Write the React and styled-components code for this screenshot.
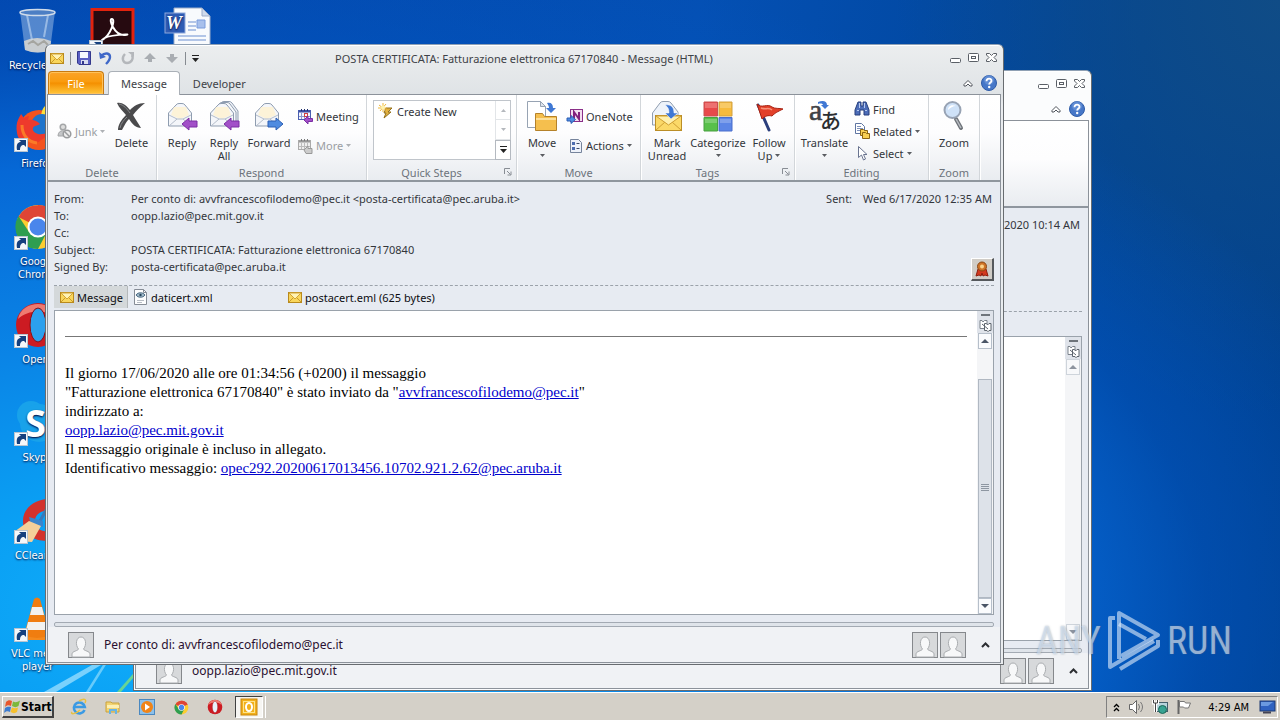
import React from 'react';
import styled, { createGlobalStyle, css } from 'styled-components';

const uiFont = "'Noto Sans', 'Open Sans', sans-serif";
const shellFont = "'DejaVu Sans Condensed', 'DejaVu Sans', sans-serif";

const GlobalStyle = createGlobalStyle`
  * {
    box-sizing: border-box;
  }

  body {
    margin: 0;
    overflow: hidden;
    font-family: ${uiFont};
    font-size: 11px;
    color: #33363b;
  }

  button {
    font: inherit;
    color: inherit;
    border: 0;
    padding: 0;
    background: none;
  }
`;

/* desktop */

const Screen = styled.div`
  display: flex;
  flex-direction: column;
  height: 100vh;
`;

const Desktop = styled.main`
  position: relative;
  flex: 1;
  min-height: 0;
  overflow: hidden;
  background: radial-gradient(ellipse 98% 98% at 14% 88%, #12b0fb 0%, #0aa0f4 18%, #0a84e6 40%, #0668d6 66%, rgba(2, 84, 190, 0.6) 82%, rgba(0, 70, 150, 0) 100%),
    radial-gradient(ellipse 30% 60% at 100% 0%, #104c86 0%, rgba(8, 68, 140, 0) 100%),
    linear-gradient(100deg, #0345ac 0%, #0450b4 50%, #004496 82%, #003f8c 100%);
`;

const LightRays = styled.svg`
  position: absolute;
  left: 0;
  bottom: 0;
`;

const ShortcutGrid = styled.nav`
  position: relative;
  display: grid;
  grid-template-columns: repeat(3, 75px);
  grid-auto-rows: 98px;
  width: max-content;
  padding-top: 7px;
`;

const Shortcut = styled.a`
  grid-column: ${({ $column }) => $column};
  display: flex;
  flex-direction: column;
  align-items: center;
  color: #fff;
  font-family: ${shellFont};
  font-size: 11px;
  line-height: 13px;
  text-align: center;
  text-decoration: none;
  text-shadow: 0 1px 2px #003;

  span {
    width: 62px;
    margin-top: 4px;
  }
`;

const Watermark = styled.div`
  position: absolute;
  right: 48px;
  bottom: 18px;
  display: flex;
  align-items: center;
  gap: 6px;
  color: rgba(225, 236, 250, 0.6);
  font-family: 'Roboto Condensed', 'Liberation Sans Narrow', 'Open Sans', sans-serif;
  font-size: 38px;
  font-weight: 400;
  line-height: 66px;
  text-shadow: 0 0 2px rgba(90, 110, 130, 0.5);
  pointer-events: none;
`;

/* message window */

const Frame = styled.section`
  position: absolute;
  top: ${({ $inset }) => $inset[0]}px;
  right: ${({ $inset }) => $inset[1]}px;
  bottom: ${({ $inset }) => $inset[2]}px;
  left: ${({ $inset }) => $inset[3]}px;
  display: flex;
  flex-direction: column;
  padding: 0 2px 1px 1px;
  border: 1px solid #686c70;
  border-top-color: #8fa0b4;
  border-radius: 6px 6px 0 0;
  box-shadow: inset 0 1px #fff;
  background: ${({ $inactive }) =>
    $inactive ? '#fbfcfd' : 'linear-gradient(#eceeef, #dfe3e6 50px, #e9ecef 60px)'};
`;

const TitleBar = styled.header`
  display: grid;
  grid-template-columns: 1fr auto 1fr;
  align-items: center;
  height: 26px;
  padding: 0 2px;
`;

const QuickAccess = styled.div`
  display: flex;
  align-items: center;
  gap: 6px;
`;

const Divider = styled.i`
  width: 1px;
  height: 13px;
  margin: 0 -1px;
  background: #868b91;
`;

const IconButton = styled.button`
  display: flex;
`;

const Title = styled.h1`
  margin: 0;
  font-size: 11px;
  font-weight: 400;
  color: #3e4247;
`;

const WindowButtons = styled.div`
  display: flex;
  justify-content: flex-end;
  gap: 5px;
  padding-right: 1px;
`;

const TabRow = styled.div`
  display: flex;
  align-items: flex-end;
  height: 23px;
  padding: 0 4px 0 1px;
`;

const Tab = styled.button`
  height: 23px;
  padding: 0 12px;
  border: 1px solid transparent;
  border-bottom: 0;
  border-radius: 4px 4px 0 0;
  color: #3e4247;

  ${({ $kind }) =>
    $kind === 'file' &&
    css`
      width: 56px;
      margin-right: 4px;
      color: #fff;
      border-color: #c87a10;
      background: linear-gradient(#fba32a, #f99b0d 45%, #f48f00 50%, #ffc63a);
      box-shadow: inset 0 0 0 1px #ffc25a;
    `}

  ${({ $kind }) =>
    $kind === 'active' &&
    css`
      position: relative;
      height: 24px;
      margin-bottom: -1px;
      border-color: #aab0b7;
      background: #fff;
    `}
`;

const TabTools = styled.div`
  display: flex;
  align-items: center;
  gap: 8px;
  height: 23px;
  margin-left: auto;
`;

const Panel = styled.div`
  display: flex;
  flex-direction: column;
  flex: 1;
  min-height: 0;
  border: 1px solid #8c929a;
  background: #e7ebf2;
`;

const Ribbon = styled.div`
  display: flex;
  height: 87px;
  flex: none;
  border-bottom: 2px solid #8f969e;
  background: linear-gradient(#fff 0%, #fdfdfe 45%, #e9ecf0 100%);
`;

const Group = styled.div`
  display: flex;
  flex-direction: column;
  width: ${({ $width }) => $width}px;
  border-right: 1px solid #d2d6da;
  box-shadow: 1px 0 #fff;
`;

const GroupBody = styled.div`
  display: flex;
  height: 69px;
  padding: 3px 4px 0;
`;

const GroupLabel = styled.div`
  display: flex;
  align-items: center;
  height: 16px;
  color: #6c737b;

  span {
    flex: 1;
    text-align: center;
  }

  button {
    margin: 0 4px 0 8px;
  }
`;

const BigButton = styled.button`
  display: flex;
  flex-direction: column;
  align-items: center;
  flex: none;
  width: ${({ $width }) => $width}px;
  padding-top: 3px;
  line-height: 13px;
  white-space: nowrap;

  > svg:first-child {
    margin-bottom: 3px;
  }
`;

const ArrowLine = styled.span`
  display: flex;
  align-items: center;
  justify-content: center;
  gap: 3px;
  height: 13px;
`;

const SmallStack = styled.div`
  display: flex;
  flex-direction: column;
  justify-content: space-evenly;
  height: 66px;
  padding: 0 4px;
`;

const SmallButton = styled.button`
  display: flex;
  align-items: center;
  gap: 3px;
  height: 22px;
  white-space: nowrap;
  color: ${({ disabled }) => (disabled ? '#9a9ea3' : 'inherit')};
`;

const Gallery = styled.div`
  display: flex;
  width: 138px;
  height: 60px;
  margin: 2px 0 0 2px;
  border: 1px solid #c0c5cb;
  background: #fff;
`;

const GallerySteps = styled.div`
  flex: 1;
  padding: 0 4px;

  button {
    height: 20px;
  }
`;

const GalleryScroll = styled.div`
  display: grid;
  grid-template-rows: 1fr 1fr 1fr;
  width: 15px;
  border-left: 1px solid #e2e5e8;

  button {
    display: flex;
    align-items: center;
    justify-content: center;
    border-bottom: 1px solid #e2e5e8;
  }

  button:last-child {
    border: 1px solid #b4b9c0;
    margin: 0 -1px -1px;
  }
`;

const MessageHeader = styled.div`
  display: flex;
  justify-content: space-between;
  flex: none;
  height: 104px;
  margin: 0 6px;
  padding: 8px 2px 0 0;
  border-bottom: 1px dashed #9ba2aa;
`;

const Fields = styled.dl`
  display: grid;
  grid-template-columns: 77px auto;
  grid-auto-rows: 17px;
  align-content: start;
  margin: 0;
  line-height: 17px;

  dd {
    margin: 0;
  }
`;

const SentColumn = styled.div`
  display: flex;
  flex-direction: column;
  justify-content: space-between;
  align-items: flex-end;
  line-height: 17px;

  p {
    display: flex;
    gap: 11px;
    margin: 0;
  }
`;

const SealButton = styled.button`
  display: flex;
  align-items: center;
  justify-content: center;
  width: 23px;
  height: 23px;
  margin: 0 -2px 4px 0;
  border: 1px solid #fff;
  border-right: 2px solid #55585c;
  border-bottom: 2px solid #55585c;
  background: #d0ccc6;
`;

const Attachments = styled.div`
  display: flex;
  flex: none;
  height: 24px;
  padding: 0 0 2px 6px;
  color: #0c0c10;
`;

const Attachment = styled.button`
  display: flex;
  align-items: center;
  gap: 2px;
  width: ${({ $width }) => $width}px;
  padding-left: 5px;
  white-space: nowrap;
  border-right: 1px solid ${({ $active }) => ($active ? '#b4b8ba' : 'transparent')};
  background: ${({ $active }) => ($active ? '#d4d8da' : 'none')};
`;

const Reading = styled.div`
  display: flex;
  flex: 1;
  min-height: 0;
  margin: 0 6px;
  border: 1px solid #9aa2ab;
  background: #fff;
`;

const Body = styled.article`
  flex: 1;
  padding: 25px 10px 0;
  font-family: 'Liberation Serif', serif;
  font-size: 15px;
  line-height: 19px;
  color: #000;

  hr {
    height: 1px;
    margin: 0 0 27px;
    border: 0;
    background: #777;
  }

  p {
    margin: 0;
  }

  a {
    color: #00c;
  }
`;

const Scrollbar = styled.div`
  display: flex;
  flex-direction: column;
  width: 16px;
  padding: 0 1px;
  background: #f4f5f7;
`;

const SplitHandle = styled.div`
  display: flex;
  flex-direction: column;
  align-items: center;
  justify-content: space-between;
  height: 22px;
  margin: 0 -1px;
  padding: 3px 0 1px;
  background: #dfe3ea;
`;

const Grip = styled.i`
  width: 9px;
  height: 2px;
  background: #6e747b;
`;

const ScrollArrow = styled.button`
  display: flex;
  align-items: center;
  justify-content: center;
  height: 16px;
  border: 1px solid #b6bfca;
  background: #fafbfd;
  opacity: ${({ disabled }) => (disabled ? 0.6 : 1)};
`;

const Track = styled.div`
  display: flex;
  flex-direction: column;
  justify-content: flex-end;
  flex: 1;
`;

const Thumb = styled.div`
  display: flex;
  align-items: center;
  justify-content: center;
  height: 88%;
  border: 1px solid #b0b8c2;
  background: #dde2e9;
`;

const Splitter = styled.div`
  flex: none;
  height: 5px;
  margin: 7px 6px 0;
  border: 1px solid #a3aab3;
  border-radius: 2px;
  background: #dfe4ea;
`;

const PeoplePane = styled.footer`
  display: flex;
  align-items: center;
  flex: none;
  gap: 2px;
  height: 35px;
  padding: 0 10px 0 20px;
  background: #f0f2f5;
  font-size: 12px;
  color: #2a1030;

  a {
    flex: 1;
    margin-left: 8px;
    color: inherit;
    text-decoration: none;
  }

  button {
    display: flex;
    margin-left: 13px;
  }
`;

/* taskbar */

const Taskbar = styled.footer`
  display: flex;
  align-items: center;
  flex: none;
  height: 28px;
  padding: 1px 2px 0;
  border-top: 1px solid #fff;
  background: #d4d0c8;
  font-family: ${shellFont};
  color: #000;
`;

const StartButton = styled.button`
  display: flex;
  align-items: center;
  width: 52px;
  height: 22px;
  padding-left: 1px;
  font-size: 12px;
  font-weight: 700;
  border: 1px solid #fff;
  border-right: 2px solid #404040;
  border-bottom: 2px solid #404040;
`;

const Launchers = styled.div`
  display: flex;
  gap: 6px;
  margin-left: 11px;
`;

const Launcher = styled.button`
  display: flex;
  align-items: center;
  justify-content: center;
  width: 28px;
  height: 22px;

  ${({ $active }) =>
    $active &&
    css`
      border: 1px solid #404040;
      border-right-color: #fff;
      border-bottom-color: #fff;
      background: #f6f5f2;
      box-shadow: 2px 0 #d4d0c8, 3px 0 #fff;
    `}
`;

const Tray = styled.div`
  display: flex;
  align-items: center;
  gap: 8px;
  height: 22px;
  margin-left: auto;
  padding: 0 2px 0 6px;
  border: 1px solid #808080;
  border-right-color: #fff;
  border-bottom-color: #fff;

  time {
    margin: 0 2px 0 8px;
  }
`;

/* icons */

const Svg = styled.svg`
  display: block;
  flex: none;
  overflow: visible;
`;

const Icon = ({ w = 16, h = w, box = `0 0 ${w} ${h}`, children }) => (
  <Svg width={w} height={h} viewBox={box} fill='none' aria-hidden='true'>
    {children}
  </Svg>
);

const MailIcon = () => (
  <Icon>
    <rect x='1.5' y='3.5' width='13' height='10' fill='#f9d65c' stroke='#b98a1c' />
    <path d='M2 13l4-4M14 13l-4-4' stroke='#c9992c' />
    <path d='M2 4l6 6 6-6z' fill='#fff2b4' stroke='#d3a435' />
  </Icon>
);

const SaveIcon = () => (
  <Icon>
    <path d='M1.5 1.5h13v13H3l-1.5-1.5z' fill='#5b60c4' stroke='#33388c' />
    <path d='M4 2h8v6H4z' fill='#f6f8ff' />
    <path d='M5 10h7v4H5z' fill='#d8dcf0' />
    <path d='M6 11h2v3H6z' fill='#33388c' />
  </Icon>
);

const UndoIcon = () => (
  <Icon>
    <path d='M3 6c4-4 9-3 9 1 0 3-2 5-4 7' stroke='#3f68c8' strokeWidth='2.4' />
    <path d='M1 2l1 7 6-2z' fill='#3f68c8' />
  </Icon>
);

const RedoIcon = () => (
  <Icon>
    <path d='M5 4C1 8 3 13 7 13s7-4 5-8' stroke='#b4b7bb' strokeWidth='2.4' />
    <path d='M8 2h6v5z' fill='#b4b7bb' />
  </Icon>
);

const StepIcon = ({ down }) => (
  <Icon>
    <path
      d={down ? 'M2 7l6 6 6-6h-4V4H6v3z' : 'M2 9l6-6 6 6h-4v3H6V9z'}
      fill='#a9adb2'
    />
  </Icon>
);

const MenuIcon = () => (
  <Icon w={9} h={9}>
    <path d='M1 1.5h7' stroke='#222' />
    <path d='M1 4h7L4.500 8z' fill='#222' />
  </Icon>
);

const MinimizeIcon = () => (
  <Icon w={13} h={12}>
    <rect x='1.500' y='6.500' width='10' height='4' rx='1' fill='#fff' stroke='#5a5f66' />
  </Icon>
);

const MaximizeIcon = () => (
  <Icon w={13} h={12}>
    <rect x='1.500' y='1.500' width='10' height='8' rx='1' fill='#fff' stroke='#5a5f66' />
    <rect x='4.500' y='4.500' width='4' height='2' stroke='#5a5f66' />
  </Icon>
);

const CloseIcon = () => (
  <Icon w={13} h={12}>
    <path
      d='M1.500 1.500h3l2 2 2-2h3v1.500L9 5.500l2.500 2.500v1.500h-3l-2-2-2 2h-3V8L4 5.500 1.500 3z'
      fill='#fff'
      stroke='#5a5f66'
    />
  </Icon>
);

const CollapseIcon = () => (
  <Icon w={10} h={8}>
    <path d='M1 5.500L5 1.500l4 4v1.500H7L5 5 3 7H1z' fill='#fff' stroke='#50555c' />
  </Icon>
);

const HelpIcon = () => (
  <Icon>
    <circle cx='8' cy='8' r='7.500' fill='#4677c8' stroke='#2f5ca8' />
    <circle cx='8' cy='5' r='5' fill='#7aa2e0' opacity='.5' />
    <path d='M5.500 6.300C5.500 2.800 10.700 3 10.500 6c0 1.500-2.300 1.700-2.300 3.500' stroke='#fff' strokeWidth='1.800' />
    <circle cx='8.200' cy='12' r='1.200' fill='#fff' />
  </Icon>
);

const DropArrow = () => (
  <Icon w={5} h={3}>
    <path d='M0 0h5L2.500 3z' fill='currentColor' opacity='.8' />
  </Icon>
);

const JunkIcon = () => (
  <Icon>
    <circle cx='7' cy='4' r='2.800' fill='#ddd' stroke='#a4a6a8' strokeWidth='1.500' />
    <path d='M2 13c0-7 9-7 9 0z' fill='#c4c6c8' stroke='#a4a6a8' />
    <circle cx='11' cy='11' r='3.800' fill='#eee' stroke='#999b9d' strokeWidth='1.500' />
    <path d='M8.500 8.500l5 5' stroke='#999b9d' strokeWidth='1.500' />
  </Icon>
);

const DeleteIcon = () => (
  <Icon w={32}>
    <path d='M2 2c5-1 9 2 13 7 4-4 8-7 15-7-5 4-9 8-12 12 3 5 5 8 8 13-5 0-9-4-12-9-4 4-5 8-7 11H3c0-5 3-10 8-15C8 10 4 7 2 2z' fill='#4a4a4c' />
    <path d='M4 3c5 1 8 5 11 9M5 27c1-5 4-8 7-11' stroke='#85878a' />
  </Icon>
);

/* open envelope shared by the reply buttons */
const Envelope = () => (
  <>
    <path d='M2.500 12L10 4q1-1.500 3-1.500h3q2 0 3 1.500l6.500 8v13h-23z' fill='#f4f6fa' stroke='#8f9db0' />
    <path d='M5 14l3-8h12l3 8-9 4z' fill='#fdf3d8' />
    <path d='M3 25l8-7h6l8 7M3 14l8 4M25 14l-8 4' stroke='#b4bdca' />
  </>
);

const BackArrow = () => (
  <path
    d='M16 23l7-6v3h8v6h-8v3z'
    fill='#a250c8'
    stroke='#7b2fa4'
  />
);

const ReplyIcon = () => (
  <Icon w={32}>
    <Envelope />
    <BackArrow />
  </Icon>
);

const ReplyAllIcon = () => (
  <Icon w={32}>
    <path d='M10 6l3-4q1-1.500 3-1.500h5q2 0 3 1.500l6 8v12' fill='#eef1f6' stroke='#8f9db0' />
    <path d='M8 7l3-4q1-1.500 3-1.500h5q2 0 3 1.500l6 8v12' fill='#f6f8fb' stroke='#8f9db0' />
    <Envelope />
    <BackArrow />
  </Icon>
);

const ForwardIcon = () => (
  <Icon w={32}>
    <Envelope />
    <path d='M15 20h8v-3l7 6-7 6v-3h-8z' fill='#4f8be0' stroke='#2c5fb4' />
  </Icon>
);

const MeetingIcon = ({ muted }) => (
  <Icon>
    <rect x='1.500' y='2.500' width='12' height='9' fill={muted ? '#eee' : '#f4f6ff'} stroke={muted ? '#aaa' : '#4a5fb0'} />
    <path d='M2 3.500h11' stroke={muted ? '#999' : '#3a4fa4'} strokeWidth='2' />
    <path d='M4.500 1v2M7.500 1v2M10.500 1v2' stroke={muted ? '#777' : '#22306c'} />
    <path d='M4.500 5v6M7.500 5v6M10.500 5v6M2 8.500h11' stroke={muted ? '#bbb' : '#8a9ad0'} />
    {!muted && <rect x='7.500' y='5.500' width='3' height='3' stroke='#d04040' />}
    {muted ? (
      <path d='M7 12l4-4v2.500h4v5H9z' fill='#ccc' stroke='#999' />
    ) : (
      <path d='M7 12l4-4v2.500h4.500v3H11V16z' fill='#a250c8' stroke='#7b2fa4' />
    )}
  </Icon>
);

const MutedMeetingIcon = () => <MeetingIcon muted />;

const QuickStepIcon = () => (
  <Icon>
    <path d='M8 5h6l-4 4h3l-7 6 2-5H6z' fill='#e0b040' stroke='#94701c' />
    <path d='M5 0v9M1 2l8 6M0 5h9M8 1L2 8' stroke='#f0b838' />
    <circle cx='5' cy='4.500' r='2' fill='#fff3b0' />
  </Icon>
);

const MoveIcon = () => (
  <Icon w={32}>
    <path d='M1.500.5h13l5 5v21h-18z' fill='#fff' stroke='#97a3b3' />
    <path d='M14.500.5v5h5z' fill='#dde3ec' stroke='#97a3b3' />
    <path d='M9.500 12.500h7l2 3h12v14h-21z' fill='#f5bf4e' stroke='#b5822a' />
    <path d='M10 17h20v2H10z' fill='#fde09a' />
    <path d='M21 2c4-1 6 1 6 5h3l-5 5-5-5h3c0-2-1-3-2-5z' fill='#3f78d4' />
  </Icon>
);

const OneNoteIcon = () => (
  <Icon>
    <rect x='3.500' y='1.500' width='12' height='12' fill='#f2def0' stroke='#8a2f88' />
    <path d='M7 11V4l5 7V4' stroke='#82207e' strokeWidth='2' />
    <path d='M0 10h4V7.500l4.500 4L4 15.500V13H0z' fill='#4f8be0' stroke='#2c5fb4' />
  </Icon>
);

const ActionsIcon = () => (
  <Icon>
    <path d='M3.500 1.500h8l3 3v10h-11z' fill='#eef2fa' stroke='#76849c' />
    <path d='M5 4h3v3H5zM5 9h3v3H5z' fill='#4c6cb0' />
    <path d='M9.500 5.500h3M9.500 10.500h3' stroke='#3a4a68' />
  </Icon>
);

const UnreadIcon = () => (
  <Icon w={32}>
    <path d='M1.500 12L9 2q1-1.500 3-1.500h5q2 0 3 1.500l7 9v13H1.500z' fill='#eef3fa' stroke='#8f9db0' />
    <rect x='4.500' y='14.500' width='26' height='15' fill='#fbd968' stroke='#bb8e27' />
    <path d='M5 29l9-8M30 29l-9-8' stroke='#cf9f34' />
    <path d='M5 15l12.500 9L30 15z' fill='#fff0ac' stroke='#cf9f34' />
    <path d='M14 4c7-1 9 3 9 8h4l-7 6-6-6h4c0-4-1-6-4-8z' fill='#3f78d4' stroke='#fff' strokeWidth='.5' />
  </Icon>
);

const CategorizeIcon = () => (
  <Icon w={32}>
    <path d='M2 1h13.500v14H2z' fill='#e8494a' stroke='#c85050' />
    <path d='M17 1h13v14H17z' fill='#f7bb3c' stroke='#d0a040' />
    <path d='M2 16.500h13.500V30H2z' fill='#58c04a' stroke='#48a040' />
    <path d='M17 16.500h13V30H17z' fill='#5c86e6' stroke='#4a6fcc' />
    <path d='M3 2h12v5H3zM18 2h11v5H18zM3 18h12v4H3zM18 18h11v4H18z' fill='#fff' opacity='.22' />
  </Icon>
);

const FlagIcon = () => (
  <Icon w={32}>
    <path d='M5 4l11 25' stroke='#2b3f7c' strokeWidth='3' strokeLinecap='round' />
    <path d='M4 3c5 5 10-1 15 3 3 2 7 1 11 2-6 3-8 4-11 7-4-1-7 0-10 3z' fill='#e2402a' stroke='#a82414' />
    <path d='M8 7c4 2 8-1 11 2' stroke='#f79078' strokeWidth='1.500' />
  </Icon>
);

const TranslateIcon = () => (
  <Icon w={32}>
    <text x='0' y='19' fontFamily="'Liberation Serif', serif" fontSize='30' fill='#404246' stroke='#404246' strokeWidth='.6'>a</text>
    <text x='11' y='27' fontFamily="'Noto Sans CJK JP', sans-serif" fontSize='21' fontWeight='500' fill='#2c2e31'>あ</text>
    <path d='M9 1c5-2 9-1 9 3h2l-4 4-4-4h2c0-1-2-2-5-1z' fill='#3f78d4' />
  </Icon>
);

const FindIcon = () => (
  <Icon>
    <path d='M4 1h3v4h2V1h3l3 8v5h-5V9H6v5H1V9z' fill='#4d6db8' stroke='#273f7c' />
    <path d='M3 9.500h2M11 9.500h2M5.500 2v5M10.500 2v5' stroke='#b7caef' />
  </Icon>
);

const RelatedIcon = () => (
  <Icon>
    <path d='M1.500.5h6l3 3v7h-9z' fill='#fff' stroke='#5f75a2' />
    <path d='M3 3.500h4M3 5.500h6M3 7.500h6' stroke='#7f92bc' />
    <path d='M6.500 6.500h3l1 1h3v5h-7z' fill='#f8cf52' stroke='#8a6412' />
    <path d='M8.500 9.500h3l1 1h3v5h-7z' fill='#f8cf52' stroke='#8a6412' />
  </Icon>
);

const SelectIcon = () => (
  <Icon>
    <path d='M4.500 1.500v11l3-2.500 2 5 2-1-2-4.500h3.500z' fill='#fff' stroke='#6a7490' />
  </Icon>
);

const ZoomIcon = () => (
  <Icon w={32}>
    <path d='M18 18l5 9' stroke='#6e7379' strokeWidth='4' strokeLinecap='round' />
    <path d='M18 18l5 9' stroke='#b8bcc2' strokeWidth='1.500' />
    <circle cx='14.500' cy='9' r='8' fill='#cfe2f8' stroke='#98a3b4' strokeWidth='2' />
    <path d='M10 9c0-4 4-6 8-4-3 0-6 2-8 4z' fill='#fff' />
  </Icon>
);

const LauncherIcon = () => (
  <Icon w={8}>
    <path d='M.5 6V.5H6' stroke='#888d94' />
    <path d='M3 3l3.500 3.500M7 3.500V7H3.500' stroke='#888d94' />
  </Icon>
);

const SealIcon = () => (
  <Icon>
    <path d='M4 8l-2 7 3-1 2 1 1-3 1 3 2-1 3 1-2-7z' fill='#d33a1e' stroke='#8f1d0c' />
    <circle cx='8' cy='5.500' r='4.500' fill='#cf7428' stroke='#8a4612' />
    <circle cx='8' cy='5.500' r='2' fill='#fbd28a' />
  </Icon>
);

const XmlIcon = () => (
  <Icon>
    <path d='M1.500.5h9l3 3v12h-12z' fill='#fdfdfe' stroke='#868c96' />
    <path d='M10.500.5v3h3' stroke='#868c96' />
    <path d='M3 6c2-3 7-3 9 0-2 3-7 3-9 0z' fill='#9fb8c8' stroke='#4c6a84' />
    <circle cx='7.500' cy='6' r='1.200' fill='#24425c' />
    <path d='M4 11.500h7M4 13.500h5' stroke='#b7bcc4' />
  </Icon>
);

const RulerIcon = () => (
  <Icon w={13}>
    <path d='M1 1.500h2l1 1.500 1.500-1.500H8v8H1z' fill='#fff' stroke='#7b828b' />
    <path d='M5.500 4.500h2L8.500 6 10 4.500h2v7h-2l-1 1.200-1-1.200H5.500z' fill='#fff' stroke='#5d646d' />
    <path d='M3 5l6 5' stroke='#5d646d' />
  </Icon>
);

const ScrollIcon = ({ down }) => (
  <Icon w={8} h={4}>
    <path d={down ? 'M0 0h8L4 4z' : 'M0 4h8L4 0z'} fill='#4a5566' />
  </Icon>
);

const GripIcon = () => (
  <Icon w={8} h={8}>
    <path d='M0 .5h8M0 2.500h8M0 4.500h8M0 6.500h8' stroke='#8d96a1' />
  </Icon>
);

const PersonIcon = () => (
  <Icon w={26}>
    <rect x='.5' y='.5' width='25' height='25' fill='#d7d9db' stroke='#85888c' />
    <path d='M4 25v-3c0-3 6-3 6.500-5C7 13 8 5 13 5s6 8 2.500 12c.5 2 6.500 2 6.500 5v3z' fill='#f7f8f9' stroke='#aaadb0' />
  </Icon>
);

const PaneIcon = () => (
  <Icon w={9} h={6}>
    <path d='M1 5l3.500-3.500L8 5' stroke='#2c2e32' strokeWidth='2' />
  </Icon>
);

const ShortcutArrow = () => (
  <>
    <rect x='.5' y='33.500' width='13' height='13' fill='#f4f7fa' stroke='#b8c4d0' />
    <path d='M3 45c-1-6 1-8 4-8l-2-2h7v7l-2-2c-3 0-4 2-4 5z' fill='#16407e' />
  </>
);

const BinIcon = () => (
  <Icon w={48}>
    <path d='M6 4.500L11 43q13 5 25 0l5-38.500z' fill='#7fa8dc' opacity='.65' />
    <path d='M10 34l1 9q13 5 25 0l1-9q-14-6-27 0z' fill='#c9cdd0' />
    <path d='M14 37l5-3 5 4 6-4 4 4' stroke='#a5a5a0' strokeWidth='2' />
    <path d='M13 8l5 25M34 8l-4 22' stroke='#c4daf4' strokeWidth='2' opacity='.6' />
    <ellipse cx='23.500' cy='5.500' rx='17.500' ry='3' fill='#4d7fc4' stroke='#d0dcea' strokeWidth='1.500' />
  </Icon>
);

const AcrobatIcon = () => (
  <Icon w={48}>
    <rect x='3' y='2.500' width='41' height='42' fill='#260a10' stroke='#e2230e' strokeWidth='3' />
    <path d='M13 33c8-4 14-20 10-21s2 17 13 16S17 27 13 33z' stroke='#fff' strokeWidth='2' />
    <ShortcutArrow />
  </Icon>
);

const WordIcon = () => (
  <Icon w={48}>
    <path d='M10 1h28l8 8v38H10z' fill='#f8fafd' stroke='#9cacc8' />
    <path d='M38 1v8h8z' fill='#cfdaec' stroke='#9cacc8' />
    <path d='M24 15h8M24 19h8M24 23h8M14 29h28M14 33h28' stroke='#9ab4e0' strokeWidth='1.500' />
    <path d='M33 13h8v8h-8z' fill='#a8c0ec' stroke='#7a9cdc' />
    <rect x='1' y='6' width='20' height='20' fill='#2f5cb4' stroke='#8ea8dc' />
    <text x='2' y='22' fontFamily="'Liberation Serif', serif" fontSize='18' fontWeight='700' fontStyle='italic' fill='#fff'>W</text>
  </Icon>
);

const FirefoxIcon = () => (
  <Icon w={48}>
    <circle cx='25' cy='25' r='20' fill='#f4531e' />
    <path d='M28 16C26 10 28 4 31 1c2 5 14 8 15 22 0 8-6 12-8 12z' fill='#fde03a' />
    <circle cx='28' cy='20' r='11' fill='#1e74cc' />
    <path d='M3 28C1 16 6 12 7 9l3 4c2-1 3-2 5-2l-1 4c6-1 10 2 12 4-2 2-6 1-7 4-1 3 2 5 5 6 4 1 7-1 10-1-3 6-8 7-9 9C10 38 4 36 3 28z' fill='#ee3a2c' />
    <path d='M8 20c0 9 5 17 15 18' stroke='#fb7a28' strokeWidth='3' />
    <ShortcutArrow />
  </Icon>
);

const ChromeArt = () => (
  <>
    <circle cx='24' cy='24' r='22' fill='#fccd30' />
    <path d='M24 24L4.500 14A22 22 0 0 1 43.500 14z' fill='#de4536' />
    <path d='M4.500 13A22 22 0 0 0 24 46l9-17-9-5-9 5z' fill='#2f9e50' />
    <path d='M24 2A22 22 0 0 1 43.500 14H24z' fill='#de4536' />
    <circle cx='24' cy='24' r='10.500' fill='#fff' />
    <circle cx='24' cy='24' r='8.500' fill='#4a86ec' />
  </>
);

const ChromeIcon = () => (
  <Icon w={48}>
    <ChromeArt />
    <ShortcutArrow />
  </Icon>
);

const OperaArt = ({ hole = '#e8f2fa' }) => (
  <>
    <circle cx='24' cy='24' r='22' fill='#cc1b22' />
    <path d='M4 18C8-2 40-2 44 18 34 8 14 8 4 18z' fill='#ef7a70' />
    <ellipse cx='24' cy='24' rx='8' ry='17' fill={hole} stroke='#8c0c12' />
  </>
);

const OperaIcon = () => (
  <Icon w={48}>
    <OperaArt hole='#2ba0ee' />
    <ShortcutArrow />
  </Icon>
);

const SkypeIcon = () => (
  <Icon w={48}>
    <circle cx='17' cy='16' r='14' fill='#18a2ea' />
    <circle cx='25' cy='24' r='19' fill='#18a2ea' />
    <text x='11' y='38' fontFamily="'Open Sans', sans-serif" fontSize='38' fontWeight='700' fill='#fff'>S</text>
    <ShortcutArrow />
  </Icon>
);

const CCleanerIcon = () => (
  <Icon w={48}>
    <path d='M46 3C28-2 8 8 9 25s18 22 37 17V32c-14 5-25 2-25-8s13-13 25-9z' fill='#d2322c' />
    <path d='M38 2L26 24' stroke='#3a78b8' strokeWidth='3' />
    <path d='M15 20l14 4v6l-12-2z' fill='#3a84cc' />
    <path d='M15 24l12 5-9 16-14-1-4-9z' fill='#f4cf9a' />
    <ShortcutArrow />
  </Icon>
);

const VlcIcon = () => (
  <Icon w={48}>
    <path d='M10 36l29 0 4 9H6z' fill='#f48a1e' />
    <path d='M20 4q3-3 6 0l10 36q-13 6-26 0z' fill='#f07d10' />
    <path d='M18 12h10l2 8H16zM14 27h18l2 8H12z' fill='#f2f2f0' />
    <ShortcutArrow />
  </Icon>
);

const PlayTriangle = () => (
  <Icon w={54} h={64}>
    <g stroke='currentColor' strokeWidth='4' strokeLinejoin='round'>
      <path d='M12 50V4l39 22L14 47' />
      <path d='M8 9H3v49l44-26' />
      <path d='M13 60l38-23v-6' />
      <path d='M12 15l27 15' />
    </g>
  </Icon>
);

const WindowsIcon = () => (
  <Icon w={17} h={16}>
    <path d='M2 3c2-2 4-2 6-1L7 7C5 6 3 6 1 8z' fill='#e8572c' />
    <path d='M9 2.500c2 1 4 1 7-1L14.500 7c-2 1.500-4 1.500-6.500 0z' fill='#7cb83c' />
    <path d='M1 9c2-1.500 4-1.500 6-1l-1 5c-2-1-4-1-6 1z' fill='#3c7cd0' />
    <path d='M8 8.500c2 1 4 1 6 0L13 13c-2 1.500-4 1.500-6.500 0z' fill='#f6c02c' />
  </Icon>
);

const ExplorerIcon = () => (
  <Icon>
    <path d='M13.500 11A5.500 5.500 0 1 1 13.800 8H4' stroke='#3a9ae4' strokeWidth='2.600' />
    <path d='M1 13C-1 16 5 15 9 11M8 2c5-3 8-2 6 2' stroke='#e8c040' strokeWidth='1.500' />
  </Icon>
);

const FolderIcon = () => (
  <Icon>
    <path d='M1 3h5l1 1h7v9H1z' fill='#f2d472' stroke='#c9a23c' />
    <path d='M2 6h12v3H2z' fill='#fdf0b4' />
    <path d='M4 15v-5h8v5h-2v-3H6v3z' fill='#68b4e4' />
  </Icon>
);

const MediaIcon = () => (
  <Icon>
    <rect x='.5' y='.5' width='15' height='15' fill='#8cc0ea' stroke='#4a88c0' />
    <circle cx='8' cy='8' r='6' fill='#f08418' />
    <path d='M6 4.500l5 3.500-5 3.500z' fill='#fff' />
  </Icon>
);

const OutlookIcon = () => (
  <Icon w={18}>
    <rect x='1' y='1' width='16' height='16' fill='#f2b01c' stroke='#c8860c' />
    <rect x='3.500' y='3.500' width='11' height='11' stroke='#fde48c' />
    <ellipse cx='9' cy='9' rx='3' ry='4' stroke='#fff' strokeWidth='2' />
  </Icon>
);

const ChevronsIcon = () => (
  <Icon w={7} h={9}>
    <path d='M1 4l2.500-2.500L6 4M1 8l2.500-2.500L6 8' stroke='#000' strokeWidth='1.300' />
  </Icon>
);

const SpeakerIcon = () => (
  <Icon>
    <path d='M1.500 5.500h3l4-4v13l-4-4h-3z' fill='#fff' stroke='#666' />
    <path d='M10.500 5q2 3 0 6M12.500 3q4 5 0 10' stroke='#777' />
  </Icon>
);

const NetworkIcon = () => (
  <Icon>
    <rect x='4.500' y='3.500' width='11' height='9' fill='#b8d4dc' stroke='#44606c' />
    <path d='M1.500 1v3h4V1M3.500 4v9' stroke='#fff' strokeWidth='3' />
    <path d='M1.500 1v3h4V1M3.500 4v9' stroke='#444' />
    <circle cx='10.500' cy='10.500' r='4' fill='#37a392' stroke='#1c6858' />
  </Icon>
);

const FlagTrayIcon = () => (
  <Icon>
    <path d='M2.500 1v14' stroke='#666' strokeWidth='2' />
    <path d='M3.500 2.500h5l1 1.500h5l-2 5h-4l-1-1h-4z' fill='#fff' stroke='#777' />
  </Icon>
);

const DisplayIcon = () => (
  <Icon>
    <rect x='1' y='2' width='15' height='10' fill='#2f62c0' stroke='#1c3870' />
    <path d='M2 3h12l-5 4H2z' fill='#6b9ae0' />
    <path d='M4 13.500h8' stroke='#445' strokeWidth='2' />
  </Icon>
);

/* content */

const shortcuts = [
  { label: 'Recycle Bin', Art: BinIcon, column: 1 },
  { name: 'Acrobat Reader', Art: AcrobatIcon, column: 2 },
  { name: 'Word document', Art: WordIcon, column: 3 },
  { label: 'Firefox', Art: FirefoxIcon, column: 1 },
  { label: 'Google Chrome', Art: ChromeIcon, column: 1 },
  { label: 'Opera', Art: OperaIcon, column: 1 },
  { label: 'Skype', Art: SkypeIcon, column: 1 },
  { label: 'CCleaner', Art: CCleanerIcon, column: 1 },
  { label: 'VLC media player', Art: VlcIcon, column: 1 },
];

const groups = [
  {
    name: 'Delete',
    width: 109,
    small: [{ label: 'Junk', Art: JunkIcon, menu: true, disabled: true }],
    smallFirst: true,
    big: [{ label: 'Delete', Art: DeleteIcon, width: 44 }],
  },
  {
    name: 'Respond',
    width: 210,
    big: [
      { label: 'Reply', Art: ReplyIcon, width: 42 },
      { label: 'Reply', second: 'All', Art: ReplyAllIcon, width: 42 },
      { label: 'Forward', Art: ForwardIcon, width: 48 },
    ],
    small: [
      { label: 'Meeting', Art: MeetingIcon },
      { label: 'More', Art: MutedMeetingIcon, menu: true, disabled: true },
    ],
  },
  { name: 'Quick Steps', width: 150, gallery: true, launcher: true },
  {
    name: 'Move',
    width: 124,
    big: [{ label: 'Move', menu: true, Art: MoveIcon, width: 42 }],
    small: [
      { label: 'OneNote', Art: OneNoteIcon },
      { label: 'Actions', Art: ActionsIcon, menu: true },
    ],
  },
  {
    name: 'Tags',
    width: 154,
    launcher: true,
    big: [
      { label: 'Mark', second: 'Unread', Art: UnreadIcon, width: 44 },
      { label: 'Categorize', menu: true, Art: CategorizeIcon, width: 58 },
      { label: 'Follow', second: 'Up', menu: true, Art: FlagIcon, width: 44 },
    ],
  },
  {
    name: 'Editing',
    width: 134,
    big: [{ label: 'Translate', menu: true, Art: TranslateIcon, width: 51 }],
    small: [
      { label: 'Find', Art: FindIcon },
      { label: 'Related', Art: RelatedIcon, menu: true },
      { label: 'Select', Art: SelectIcon, menu: true },
    ],
  },
  { name: 'Zoom', width: 51, big: [{ label: 'Zoom', Art: ZoomIcon, width: 42 }] },
];

const fields = [
  ['From:', 'Per conto di: avvfrancescofilodemo@pec.it <posta-certificata@pec.aruba.it>'],
  ['To:', 'oopp.lazio@pec.mit.gov.it'],
  ['Cc:', ''],
  ['Subject:', 'POSTA CERTIFICATA: Fatturazione elettronica 67170840'],
  ['Signed By:', 'posta-certificata@pec.aruba.it'],
];

const SmallButtons = ({ items }) => (
  <SmallStack>
    {items.map(({ label, Art, menu, disabled }) => (
      <SmallButton key={label} disabled={disabled}>
        <Art />
        {label}
        {menu && <DropArrow />}
      </SmallButton>
    ))}
  </SmallStack>
);

const RowArrow = ({ down }) => (
  <Icon w={5} h={3}>
    <path d={down ? 'M0 0h5L2.500 3z' : 'M0 3h5L2.500 0z'} fill='#b4b8bd' />
  </Icon>
);

const QuickSteps = () => (
  <Gallery>
    <GallerySteps>
      <SmallButton>
        <QuickStepIcon />
        Create New
      </SmallButton>
    </GallerySteps>
    <GalleryScroll>
      <button aria-label='Previous row' disabled>
        <RowArrow />
      </button>
      <button aria-label='Next row' disabled>
        <RowArrow down />
      </button>
      <button aria-label='More steps'>
        <MenuIcon />
      </button>
    </GalleryScroll>
  </Gallery>
);

const RibbonGroup = ({ group }) => (
  <Group $width={group.width}>
    <GroupBody>
      {group.smallFirst && <SmallButtons items={group.small} />}
      {group.gallery && <QuickSteps />}
      {group.big?.map(({ label, second, menu, Art, width }) => (
        <BigButton key={label + second} $width={width}>
          <Art />
          {label}
          <ArrowLine>
            {second}
            {menu && <DropArrow />}
          </ArrowLine>
        </BigButton>
      ))}
      {group.small && !group.smallFirst && <SmallButtons items={group.small} />}
    </GroupBody>
    <GroupLabel>
      <span>{group.name}</span>
      {group.launcher && (
        <IconButton aria-label={`${group.name} options`}>
          <LauncherIcon />
        </IconButton>
      )}
    </GroupLabel>
  </Group>
);

const MessageWindow = ({ inset, inactive, title, sender, sent, children }) => (
  <Frame $inset={inset} $inactive={inactive}>
    <TitleBar>
      <QuickAccess>
        {!inactive && (
          <>
            <MailIcon />
            <Divider />
            <IconButton aria-label='Save'>
              <SaveIcon />
            </IconButton>
            <IconButton aria-label='Undo'>
              <UndoIcon />
            </IconButton>
            <IconButton aria-label='Redo'>
              <RedoIcon />
            </IconButton>
            <IconButton aria-label='Previous item'>
              <StepIcon />
            </IconButton>
            <IconButton aria-label='Next item'>
              <StepIcon down />
            </IconButton>
            <Divider />
            <IconButton aria-label='Customize toolbar'>
              <MenuIcon />
            </IconButton>
          </>
        )}
      </QuickAccess>
      <Title>{title}</Title>
      <WindowButtons>
        <IconButton aria-label='Minimize'>
          <MinimizeIcon />
        </IconButton>
        <IconButton aria-label='Maximize'>
          <MaximizeIcon />
        </IconButton>
        <IconButton aria-label='Close'>
          <CloseIcon />
        </IconButton>
      </WindowButtons>
    </TitleBar>

    <TabRow>
      {!inactive && (
        <>
          <Tab $kind='file'>File</Tab>
          <Tab $kind='active'>Message</Tab>
          <Tab>Developer</Tab>
        </>
      )}
      <TabTools>
        <IconButton aria-label='Minimize the ribbon'>
          <CollapseIcon />
        </IconButton>
        <IconButton aria-label='Help'>
          <HelpIcon />
        </IconButton>
      </TabTools>
    </TabRow>

    <Panel>
      <Ribbon>
        {!inactive && groups.map((group) => <RibbonGroup key={group.name} group={group} />)}
      </Ribbon>

      <MessageHeader>
        <Fields>
          {!inactive &&
            fields.map(([label, value]) => (
              <React.Fragment key={label}>
                <dt>{label}</dt>
                <dd>{value}</dd>
              </React.Fragment>
            ))}
        </Fields>
        <SentColumn>
          <p>
            {!inactive && <span>Sent:</span>}
            <span>{sent}</span>
          </p>
          {!inactive && (
            <SealButton aria-label='Digital signature'>
              <SealIcon />
            </SealButton>
          )}
        </SentColumn>
      </MessageHeader>

      <Attachments>
        {!inactive && (
          <>
            <Attachment $width={74} $active>
              <MailIcon />
              Message
            </Attachment>
            <Attachment $width={154}>
              <XmlIcon />
              daticert.xml
            </Attachment>
            <Attachment $width={150}>
              <MailIcon />
              postacert.eml (625 bytes)
            </Attachment>
          </>
        )}
      </Attachments>

      <Reading>
        <Body>{children}</Body>
        <Scrollbar>
          <SplitHandle>
            <Grip />
            <RulerIcon />
          </SplitHandle>
          <ScrollArrow aria-label='Scroll up' disabled={inactive}>
            <ScrollIcon />
          </ScrollArrow>
          <Track>
            {!inactive && (
              <Thumb>
                <GripIcon />
              </Thumb>
            )}
          </Track>
          <ScrollArrow aria-label='Scroll down' disabled={inactive}>
            <ScrollIcon down />
          </ScrollArrow>
        </Scrollbar>
      </Reading>

      <Splitter />
      <PeoplePane>
        <PersonIcon />
        <a href='#sender'>{sender}</a>
        <PersonIcon />
        <PersonIcon />
        <button aria-label='Expand people pane'>
          <PaneIcon />
        </button>
      </PeoplePane>
    </Panel>
  </Frame>
);

const App = () => (
  <Screen>
    <GlobalStyle />
    <Desktop>
      <LightRays width='140' height='60' viewBox='0 0 140 60' aria-hidden='true'>
        <path d='M44 60L108 24l8 0L56 60z' fill='#a8e4ff' opacity='.7' />
        <path d='M86 60l20-32h3L89 60z' fill='#8fdcfc' opacity='.7' />
        <path d='M117 60l23-26v4l-19 22z' fill='#7fe07c' opacity='.8' />
      </LightRays>
      <ShortcutGrid>
        {shortcuts.map(({ label, name, Art, column }) => (
          <Shortcut key={label || name} href='#open' aria-label={name} $column={column}>
            <Art />
            {label && <span>{label}</span>}
          </Shortcut>
        ))}
      </ShortcutGrid>

      <MessageWindow
        inset={[70, 188, 1, 133]}
        inactive
        sender='oopp.lazio@pec.mit.gov.it'
        sent='6/17/2020 10:14 AM'
      />

      <MessageWindow
        inset={[44, 276, 27, 45]}
        title='POSTA CERTIFICATA: Fatturazione elettronica 67170840 - Message (HTML)'
        sender='Per conto di: avvfrancescofilodemo@pec.it'
        sent='Wed 6/17/2020 12:35 AM'
      >
        <hr />
        <p>Il giorno 17/06/2020 alle ore 01:34:56 (+0200) il messaggio</p>
        <p>
          "Fatturazione elettronica 67170840" è stato inviato da "
          <a href='mailto:avvfrancescofilodemo@pec.it'>avvfrancescofilodemo@pec.it</a>"
        </p>
        <p>indirizzato a:</p>
        <p>
          <a href='mailto:oopp.lazio@pec.mit.gov.it'>oopp.lazio@pec.mit.gov.it</a>
        </p>
        <p>Il messaggio originale è incluso in allegato.</p>
        <p>
          Identificativo messaggio:{' '}
          <a href='mailto:opec292.20200617013456.10702.921.2.62@pec.aruba.it'>
            opec292.20200617013456.10702.921.2.62@pec.aruba.it
          </a>
        </p>
      </MessageWindow>

      <Watermark>
        ANY
        <PlayTriangle />
        RUN
      </Watermark>
    </Desktop>

    <Taskbar>
      <StartButton>
        <WindowsIcon />
        Start
      </StartButton>
      <Launchers>
        <Launcher aria-label='Internet Explorer'>
          <ExplorerIcon />
        </Launcher>
        <Launcher aria-label='File Explorer'>
          <FolderIcon />
        </Launcher>
        <Launcher aria-label='Media Player'>
          <MediaIcon />
        </Launcher>
        <Launcher aria-label='Chrome'>
          <Icon w={15} box='0 0 48 48'>
            <ChromeArt />
          </Icon>
        </Launcher>
        <Launcher aria-label='Opera'>
          <Icon w={16} box='0 0 48 48'>
            <OperaArt />
          </Icon>
        </Launcher>
        <Launcher aria-label='Outlook' $active>
          <OutlookIcon />
        </Launcher>
      </Launchers>
      <Tray>
        <ChevronsIcon />
        <SpeakerIcon />
        <NetworkIcon />
        <FlagTrayIcon />
        <time>4:29 AM</time>
        <DisplayIcon />
      </Tray>
    </Taskbar>
  </Screen>
);

export default App;
